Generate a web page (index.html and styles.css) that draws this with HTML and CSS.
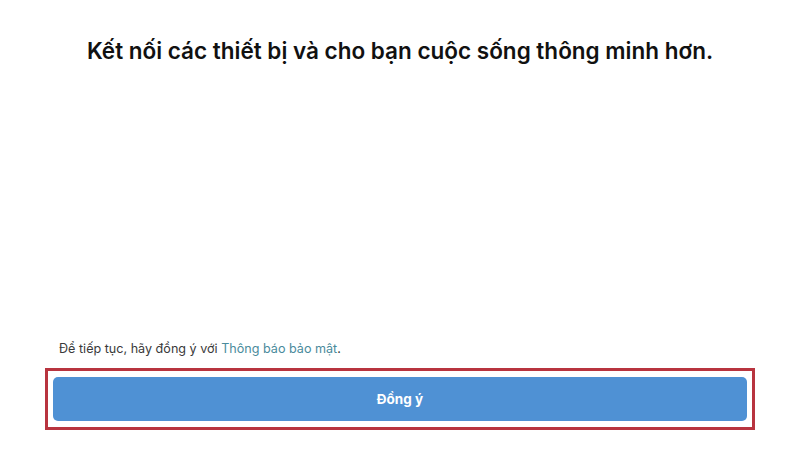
FILE: index.html
```html
<!DOCTYPE html>
<html lang="vi">
<head>
<meta charset="utf-8">
<link rel="stylesheet" href="styles.css">
</head>
<body>
<main class="page">
  <h1 class="title">Kết nối các thiết bị và cho bạn cuộc sống thông minh hơn.</h1>
  <div class="spacer"></div>
  <p class="notice">Để tiếp tục, hãy đồng ý với <a class="link" href="#">Thông báo bảo mật</a>.</p>
  <div class="highlight">
    <button class="agree">Đồng ý</button>
  </div>
</main>
</body>
</html>
```
FILE: styles.css
```css
html, body {
  margin: 0;
  padding: 0;
  background: #ffffff;
}
.page {
  width: 800px;
  height: 450px;
  display: flex;
  flex-direction: column;
  box-sizing: border-box;
  padding: 36px 0 0 0;
  font-family: Inter, "Noto Sans", sans-serif;
}
.title {
  margin: 0;
  text-align: center;
  font-size: 22.5px;
  font-weight: 600;
  color: #111111;
  line-height: 30px;
}
.spacer {
  flex: 1;
}
.notice {
  margin: 0 0 11px 59px;
  font-size: 12.6px;
  line-height: 17px;
  color: #3a3a3a;
}
.link {
  color: #4a8b9c;
  text-decoration: none;
}
.highlight {
  margin: 0 0 20px 45px;
  width: 710px;
  height: 62px;
  box-sizing: border-box;
  border: 3px solid #b8343f;
  padding: 6px 5px;
  display: flex;
}
.agree {
  flex: 1;
  border: none;
  border-radius: 5px;
  background: #4f91d4;
  color: #ffffff;
  font-family: Inter, "Noto Sans", sans-serif;
  font-weight: 700;
  font-size: 13.5px;
}
```
